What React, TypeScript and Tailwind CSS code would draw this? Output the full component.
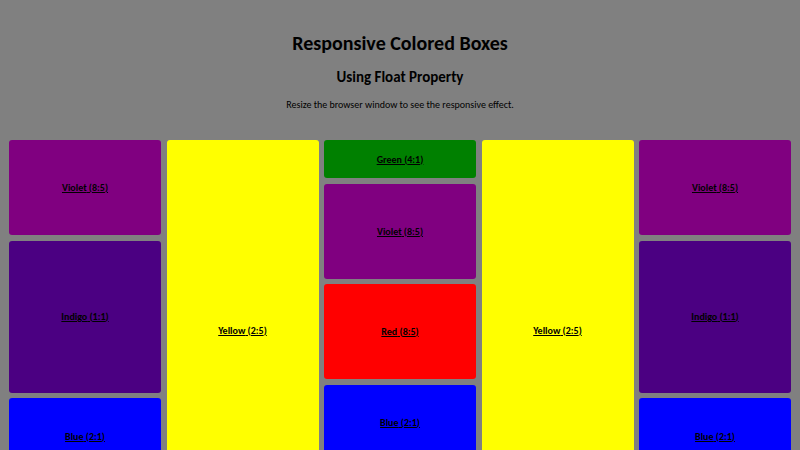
import React from 'react'

type Box = { name: string; ratio: string; color: string; aspect: string }

const violet: Box = { name: 'Violet', ratio: '8:5', color: 'bg-[#800080]', aspect: 'aspect-[8/5]' }
const indigo: Box = { name: 'Indigo', ratio: '1:1', color: 'bg-[#4b0082]', aspect: 'aspect-square' }
const blue: Box = { name: 'Blue', ratio: '2:1', color: 'bg-[#0000ff]', aspect: 'aspect-[2/1]' }
const yellow: Box = { name: 'Yellow', ratio: '2:5', color: 'bg-[#ffff00]', aspect: 'aspect-[2/5]' }
const green: Box = { name: 'Green', ratio: '4:1', color: 'bg-[#008000]', aspect: 'aspect-[4/1]' }
const red: Box = { name: 'Red', ratio: '8:5', color: 'bg-[#ff0000]', aspect: 'aspect-[8/5]' }

const columns: Box[][] = [
  [violet, indigo, blue],
  [yellow],
  [green, violet, red, blue],
  [yellow],
  [violet, indigo, blue],
]

function ColorBox({ box }: { box: Box }) {
  return (
    <div className={`${box.color} ${box.aspect} w-full rounded-[3px] flex items-center justify-center`}>
      <a href="#" className="text-[10px] font-bold underline text-black">
        {box.name} ({box.ratio})
      </a>
    </div>
  )
}

export default function App() {
  return (
    <div
      className="h-screen w-full overflow-hidden bg-[#808080] text-black"
      style={{ fontFamily: "Carlito, Lato, 'Open Sans', sans-serif" }}
    >
      <div className="flex flex-col items-center">
        <h1 className="mt-[31px] text-[20px] leading-[24px] font-bold">Responsive Colored Boxes</h1>
        <h2 className="mt-[12px] text-[15px] leading-[20px] font-bold">Using Float Property</h2>
        <p className="mt-[11px] text-[10px] leading-[14px]">Resize the browser window to see the responsive effect.</p>
      </div>
      <div className="mt-[28px] flex gap-[5.5px] px-[9px] items-start">
        {columns.map((col, i) => (
          <div key={i} className="flex-1 flex flex-col gap-[5.5px]">
            {col.map((b, j) => (
              <ColorBox key={j} box={b} />
            ))}
          </div>
        ))}
      </div>
    </div>
  )
}
